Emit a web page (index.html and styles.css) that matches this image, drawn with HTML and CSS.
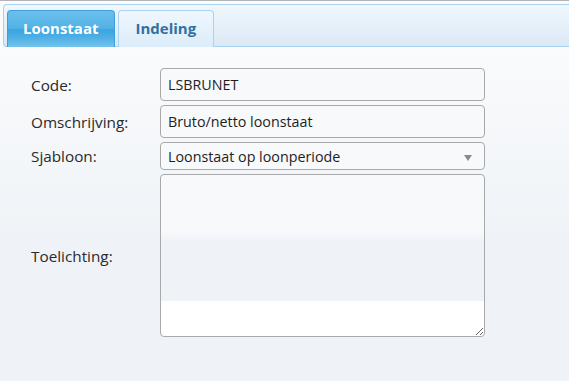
FILE: index.html
```html
<!DOCTYPE html>
<html lang="nl">
<head>
<meta charset="utf-8">
<title>Loonstaat</title>
<link rel="stylesheet" href="styles.css">
</head>
<body>
<div class="topline"></div>
<div class="tabs-wrap">
  <ul class="tabs">
    <li class="tab active">Loonstaat</li>
    <li class="tab wide">Indeling</li>
  </ul>
</div>
<form class="form">
  <label class="lbl" for="code">Code:</label>
  <input class="field" id="code" type="text" value="LSBRUNET">
  <label class="lbl" for="omschr">Omschrijving:</label>
  <input class="field" id="omschr" type="text" value="Bruto/netto loonstaat">
  <label class="lbl" for="sjab">Sjabloon:</label>
  <div class="select-wrap">
    <select class="select" id="sjab">
      <option>Loonstaat op loonperiode</option>
    </select>
    <span class="arrow"></span>
  </div>
  <label class="lbl" for="toel">Toelichting:</label>
  <textarea class="area" id="toel"></textarea>
</form>
</body>
</html>
```

FILE: styles.css
```css
html, body {
  margin: 0;
  padding: 0;
}
body {
  width: 569px;
  height: 381px;
  overflow: hidden;
  font-family: "Open Sans", "DejaVu Sans", sans-serif;
  font-size: 15px;
  color: #2a2a2a;
  background: linear-gradient(#fafbfc 0, #fafbfc 47px, #eff3f7 240px, #eff3f7 100%);
}
.topline {
  height: 1px;
  background: #b3b3b3;
}
.tabs-wrap {
  padding: 3px 0 0 3px;
}
.tabs {
  list-style: none;
  margin: 0;
  padding: 5px 0 0 3px;
  display: flex;
  gap: 3px;
  border: 1px solid #a9d1f0;
  border-right: 0;
  border-radius: 4px 0 0 4px;
  background: linear-gradient(#f0f7fd, #dbe9f6);
}
.tab {
  line-height: 35px;
  height: 36px;
  padding: 0 15px;
  margin-bottom: -1px;
  border: 1px solid #acd2f0;
  border-bottom: 0;
  border-radius: 4px 4px 0 0;
  font-weight: bold;
  color: #33709f;
  background: linear-gradient(#eff7fe, #dcecf9);
}
.tab.wide {
  padding: 0 17px 0 17px;
}
.tab.active {
  color: #fff;
  border-color: #3f9ed9;
  background: linear-gradient(#6cbfeb 0%, #52b2e6 48%, #38a4df 52%, #4fb1e5 75%, #74c4ec 100%);
}
.form {
  display: grid;
  grid-template-columns: 129px 325px;
  row-gap: 4px;
  align-items: center;
  padding: 21px 0 0 31px;
}
.lbl {
  color: #2a2a2a;
  font-size: 15.3px;
}
.field, .select, .area {
  box-sizing: border-box;
  width: 325px;
  margin: 0;
  font-family: inherit;
  font-size: 14.3px;
  color: #1e1e1e;
  border: 1px solid #a9a9a9;
  border-radius: 4px;
  outline: none;
}
.field {
  height: 33px;
  padding: 0 7px;
  background: #f8f9fb;
}
.select-wrap {
  position: relative;
  height: 28px;
}
.select {
  height: 28px;
  padding: 0 7px;
  appearance: none;
  -webkit-appearance: none;
  background: #f8f9fb;
}
.arrow {
  position: absolute;
  left: 304px;
  top: 13px;
  width: 0;
  height: 0;
  border-left: 4px solid transparent;
  border-right: 4px solid transparent;
  border-top: 6px solid #8a8a8a;
  pointer-events: none;
}
.area {
  height: 163px;
  resize: both;
  display: block;
  background: linear-gradient(#f8f9fb 0, #f8f9fb 57px, #eff3f7 66px, #eff3f7 126px, #ffffff 126px, #ffffff 100%);
}
```
